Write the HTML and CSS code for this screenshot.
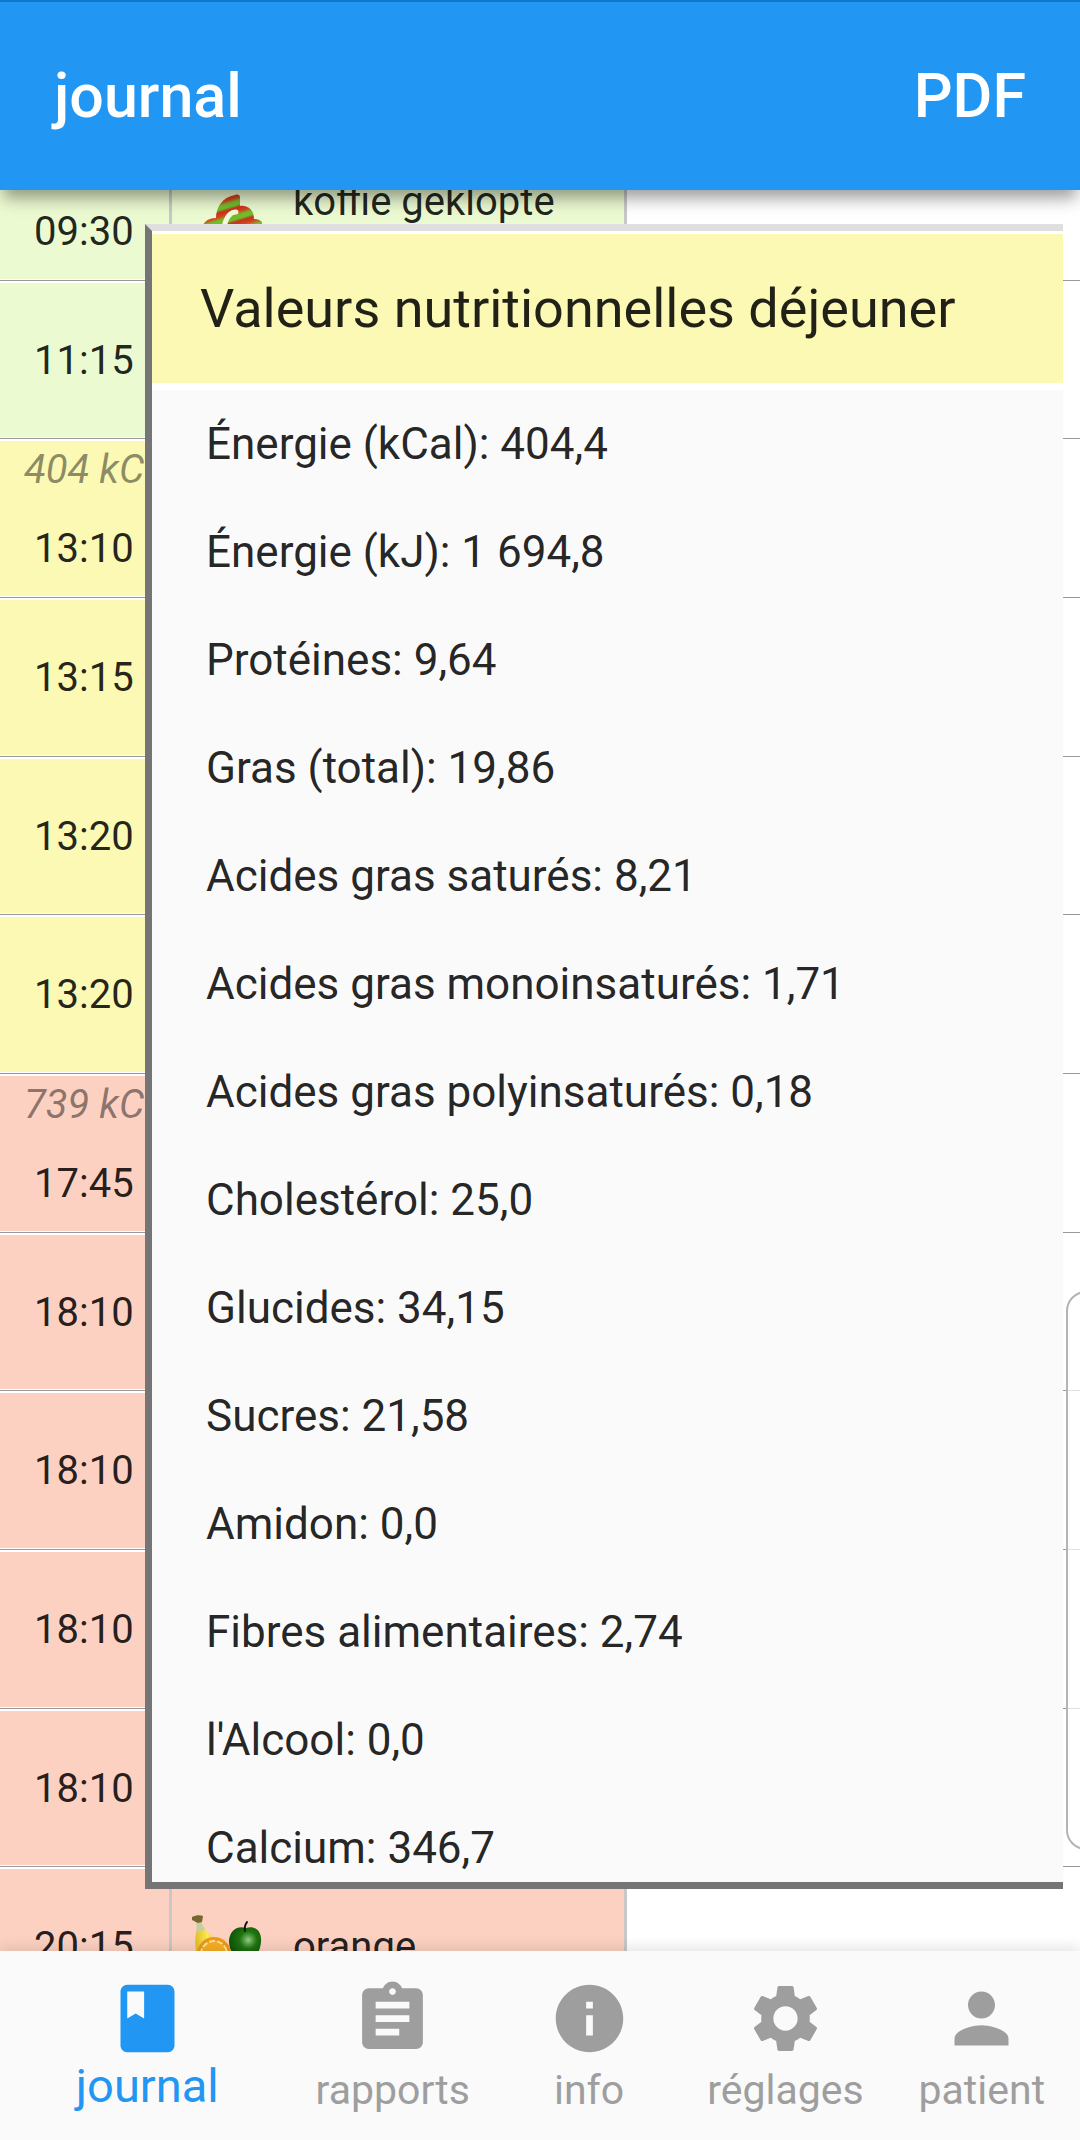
FILE: index.html
```html
<!DOCTYPE html>
<html lang="fr">
<head>
    <meta charset="UTF-8">
    <meta name="viewport" content="width=device-width, initial-scale=1">
    <title>journal</title>
    <link rel="stylesheet" href="styles.css">
</head>
<body>
    <header class="app-bar">
        <h1>journal</h1>
        <button type="button" class="pdf-button">PDF</button>
    </header>

    <main class="journal">
        <ul class="meals">
            <li class="meal breakfast">
                <div class="time-cell">
                    <span class="kcal"></span>
                    <time>09:30</time>
                </div>
                <div class="food-cell">
                    <svg class="food-icon" viewBox="0 0 72 72" aria-hidden="true">
                        <defs>
                            <linearGradient id="stripes" x1="0" y1="0" x2="4" y2="13" gradientUnits="userSpaceOnUse" spreadMethod="repeat">
                                <stop offset="0" stop-color="#c8321a"/>
                                <stop offset="0.3" stop-color="#d8441f"/>
                                <stop offset="0.55" stop-color="#6fbf2c"/>
                                <stop offset="0.8" stop-color="#6fbf2c"/>
                                <stop offset="1" stop-color="#c8321a"/>
                            </linearGradient>
                        </defs>
                        <path fill="url(#stripes)" d="M12 66c0-8 5-13 14-13 0-10 6-21 19-23 3-1 5 0 5 2v9c8-1 14 4 14 13 6 0 10 3 10 9v3H12z"/>
                        <path fill="none" stroke="#f1fbdc" stroke-width="5" stroke-linecap="round" d="M46 47c-7 0-10 6-12 15"/>
                    </svg>
                    <span>koffie geklopte</span>
                </div>
            </li>
            <li class="meal breakfast">
                <div class="time-cell"><time>11:15</time></div>
                <div class="food-cell"></div>
            </li>
            <li class="meal lunch">
                <div class="time-cell">
                    <span class="kcal">404 kCal</span>
                    <time>13:10</time>
                </div>
                <div class="food-cell"></div>
            </li>
            <li class="meal lunch">
                <div class="time-cell"><time>13:15</time></div>
                <div class="food-cell"></div>
            </li>
            <li class="meal lunch">
                <div class="time-cell"><time>13:20</time></div>
                <div class="food-cell"></div>
            </li>
            <li class="meal lunch">
                <div class="time-cell"><time>13:20</time></div>
                <div class="food-cell"></div>
            </li>
            <li class="meal dinner">
                <div class="time-cell">
                    <span class="kcal">739 kCal</span>
                    <time>17:45</time>
                </div>
                <div class="food-cell"></div>
            </li>
            <li class="meal dinner">
                <div class="time-cell"><time>18:10</time></div>
                <div class="food-cell"></div>
            </li>
            <li class="meal dinner">
                <div class="time-cell"><time>18:10</time></div>
                <div class="food-cell"></div>
            </li>
            <li class="meal dinner">
                <div class="time-cell"><time>18:10</time></div>
                <div class="food-cell"></div>
            </li>
            <li class="meal dinner">
                <div class="time-cell"><time>18:10</time></div>
                <div class="food-cell"></div>
            </li>
            <li class="meal dinner">
                <div class="time-cell"><time>20:15</time></div>
                <div class="food-cell">
                    <svg class="food-icon" viewBox="0 0 72 72" aria-hidden="true">
                        <defs>
                            <radialGradient id="apple" cx="0.6" cy="0.4" r="0.6">
                                <stop offset="0" stop-color="#9ccb8c"/>
                                <stop offset="0.25" stop-color="#4f9a3c"/>
                                <stop offset="0.45" stop-color="#1f7412"/>
                                <stop offset="1" stop-color="#0f5205"/>
                            </radialGradient>
                            <linearGradient id="banana" x1="0" y1="0" x2="1" y2="0">
                                <stop offset="0" stop-color="#e3bd25"/>
                                <stop offset="0.5" stop-color="#fbe85a"/>
                                <stop offset="1" stop-color="#e8bb1c"/>
                            </linearGradient>
                        </defs>
                        <path fill="url(#banana)" d="M7 18l6-2c5 6 11 9 13 17l4 26H9C7 46 3 32 7 18z"/>
                        <path fill="#c5cf9c" d="M5 9l6-1c0 4 2 7 4 10-3 2-6 3-9 4 1-5 1-9-1-13z"/>
                        <path fill="#75672d" d="M2 6c4-2 8-2 11-1l-1 6-4 1-6-3z"/>
                        <circle cx="24" cy="43" r="17" fill="#f09a14"/>
                        <circle cx="24" cy="43" r="13" fill="#f8ae23" stroke="#fbe6a0" stroke-width="2" stroke-dasharray="6 2"/>
                        <path fill="url(#apple)" d="M56 17c9-3 16 3 15 14-1 12-8 19-16 17-8 2-15-5-16-17 0-11 8-17 17-14z"/>
                        <path fill="none" stroke="#111" stroke-width="2" stroke-linecap="round" d="M55 20c-1-4 0-6 2-9"/>
                    </svg>
                    <span>orange</span>
                </div>
            </li>
        </ul>

        <aside class="side-panel"></aside>

        <section class="nutrition" role="dialog" aria-labelledby="nutrition-title">
            <h2 id="nutrition-title">Valeurs nutritionnelles déjeuner</h2>
            <ul class="nutrients">
                <li>Énergie (kCal): 404,4</li>
                <li>Énergie (kJ): 1 694,8</li>
                <li>Protéines: 9,64</li>
                <li>Gras (total): 19,86</li>
                <li>Acides gras saturés: 8,21</li>
                <li>Acides gras monoinsaturés: 1,71</li>
                <li>Acides gras polyinsaturés: 0,18</li>
                <li>Cholestérol: 25,0</li>
                <li>Glucides: 34,15</li>
                <li>Sucres: 21,58</li>
                <li>Amidon: 0,0</li>
                <li>Fibres alimentaires: 2,74</li>
                <li>l'Alcool: 0,0</li>
                <li>Calcium: 346,7</li>
            </ul>
        </section>
    </main>

    <nav class="bottom-nav">
        <a href="#journal" class="active" aria-current="page">
            <svg viewBox="0 0 24 24" aria-hidden="true"><path d="M18 2H6c-1.100 0-2 .9-2 2v16c0 1.100.9 2 2 2h12c1.100 0 2-.9 2-2V4c0-1.100-.9-2-2-2zM6 4h5v8l-2.500-1.500L6 12V4z"/></svg>
            <span>journal</span>
        </a>
        <a href="#rapports">
            <svg viewBox="0 0 24 24" aria-hidden="true"><path d="M19 3h-4.180C14.400 1.840 13.300 1 12 1c-1.300 0-2.400.84-2.820 2H5c-1.100 0-2 .9-2 2v14c0 1.100.9 2 2 2h14c1.100 0 2-.9 2-2V5c0-1.100-.9-2-2-2zm-7 0c.55 0 1 .45 1 1s-.45 1-1 1-1-.45-1-1 .45-1 1-1zm2 14H7v-2h7v2zm3-4H7v-2h10v2zm0-4H7V7h10v2z"/></svg>
            <span>rapports</span>
        </a>
        <a href="#info">
            <svg viewBox="0 0 24 24" aria-hidden="true"><path d="M12 2C6.480 2 2 6.480 2 12s4.480 10 10 10 10-4.480 10-10S17.520 2 12 2zm1 15h-2v-6h2v6zm0-8h-2V7h2v2z"/></svg>
            <span>info</span>
        </a>
        <a href="#reglages">
            <svg viewBox="0 0 24 24" aria-hidden="true"><path d="M19.140 12.940c.04-.3.060-.61.060-.94 0-.32-.02-.64-.07-.94l2.030-1.580c.18-.14.230-.41.120-.61l-1.920-3.320c-.12-.22-.37-.29-.59-.22l-2.390.96c-.5-.38-1.030-.7-1.620-.94l-.36-2.540c-.04-.24-.24-.41-.48-.41h-3.840c-.24 0-.43.17-.47.41l-.36 2.540c-.59.24-1.130.57-1.620.94l-2.390-.96c-.22-.08-.47 0-.59.22L2.740 8.870c-.12.210-.08.470.120.610l2.030 1.580c-.05.3-.09.63-.09.94s.02.64.070.94l-2.030 1.580c-.18.140-.23.410-.12.610l1.920 3.320c.12.220.37.290.59.220l2.390-.96c.5.380 1.030.7 1.620.94l.36 2.540c.05.240.24.410.48.410h3.840c.24 0 .44-.17.470-.41l.36-2.540c.59-.24 1.130-.56 1.620-.94l2.390.96c.22.080.47 0 .59-.22l1.920-3.320c.12-.22.070-.47-.12-.61l-2.010-1.580zM12 15.600c-1.980 0-3.600-1.620-3.600-3.600s1.620-3.600 3.600-3.600 3.600 1.620 3.600 3.600-1.620 3.600-3.600 3.600z"/></svg>
            <span>réglages</span>
        </a>
        <a href="#patient">
            <svg viewBox="0 0 24 24" aria-hidden="true"><path d="M12 12c2.210 0 4-1.790 4-4s-1.790-4-4-4-4 1.790-4 4 1.790 4 4 4zm0 2c-2.670 0-8 1.340-8 4v2h16v-2c0-2.660-5.330-4-8-4z"/></svg>
            <span>patient</span>
        </a>
    </nav>
</body>
</html>
```
FILE: styles.css
```css
* {
    box-sizing: border-box;
}
body {
    margin: 0;
    height: 100vh;
    display: flex;
    flex-direction: column;
    overflow: hidden;
    font-family: Roboto, "Noto Sans", sans-serif;
    font-size: 40px;
    color: rgba(0, 0, 0, 0.87);
    background-color: #fff;
}
h1, h2, ul {
    margin: 0;
    padding: 0;
    list-style: none;
}

/* top bar */
.app-bar {
    position: relative;
    z-index: 2;
    flex: none;
    display: flex;
    justify-content: space-between;
    align-items: center;
    height: 190px;
    padding: 0 54px;
    border-top: 2px solid #1077cc;
    background-color: #2196f3;
    box-shadow: 0 12px 14px -4px rgba(0, 0, 0, 0.32), 0 3px 28px rgba(0, 0, 0, 0.12);
    color: #fff;
}
.app-bar h1,
.pdf-button {
    font-family: inherit;
    font-size: 61px;
    font-weight: 500;
    line-height: 72px;
}
.pdf-button {
    padding: 0;
    border: none;
    background: none;
    color: inherit;
    cursor: pointer;
}

/* meal list, scrolled part way down */
.journal {
    position: relative;
    flex: 1;
    min-height: 0;
    display: flex;
    flex-direction: column;
    overflow: hidden;
}
.meals {
    flex: 1;
    display: flex;
    flex-direction: column;
    margin: -68px 0 -75px;
}
.meal {
    flex: 1;
    display: flex;
    padding: 2px 0 1px;
    border-bottom: 1px solid #999;
}
.breakfast {
    --meal-color: #ecfad2;
}
.lunch {
    --meal-color: #fbf9b4;
}
.dinner {
    --meal-color: #fcd1c2;
}
.time-cell,
.food-cell {
    display: flex;
    background-color: var(--meal-color);
    border-right: 3px solid #c8c8c8;
    white-space: nowrap;
}
.time-cell {
    flex-direction: column;
    width: 172px;
}
.time-cell time {
    flex: 1;
    display: flex;
    align-items: center;
    padding-left: 34px;
}
.kcal {
    height: 60px;
    padding-left: 24px;
    line-height: 58px;
    font-style: italic;
    color: rgba(0, 0, 0, 0.45);
}
.food-cell {
    align-items: center;
    gap: 31px;
    width: 455px;
    padding-left: 18px;
}
.food-icon {
    width: 72px;
    height: 72px;
}
.side-panel {
    position: absolute;
    top: 1101px;
    bottom: 101px;
    right: -60px;
    width: 74px;
    border: 2px solid #b4b4b4;
    border-radius: 20px;
    background-color: rgba(255, 255, 255, 0.7);
}

/* nutrition popup */
.nutrition {
    position: absolute;
    top: 34px;
    right: 17px;
    bottom: 62px;
    left: 145px;
    display: flex;
    flex-direction: column;
    border: 7px solid #757575;
    border-top-color: #dfdfdf;
    border-right: none;
    background-color: #fafafa;
}
.nutrition h2 {
    flex: none;
    padding: 38px 48px;
    border-top: 3px solid #fff;
    border-bottom: 7px solid #fff;
    background-color: #fbf9b4;
    font-size: 54px;
    font-weight: 400;
    line-height: 73px;
    white-space: nowrap;
}
.nutrients {
    flex: 1;
    min-height: 0;
    overflow: hidden;
    padding-left: 54px;
    font-size: 44px;
    line-height: 108px;
}

/* bottom navigation */
.bottom-nav {
    position: relative;
    z-index: 2;
    flex: none;
    display: flex;
    height: 189px;
    background-color: #fafafa;
    box-shadow: 0 -4px 12px rgba(0, 0, 0, 0.1);
}
.bottom-nav a {
    flex: 2;
    display: flex;
    flex-direction: column;
    align-items: center;
    padding-top: 27px;
    font-size: 41px;
    line-height: 62px;
    color: #9e9e9e;
    text-decoration: none;
}
.bottom-nav a.active {
    flex: 3;
    font-size: 47px;
    line-height: 54px;
    color: #2196f3;
}
.bottom-nav svg {
    width: 81px;
    height: 81px;
    fill: currentColor;
}
```
